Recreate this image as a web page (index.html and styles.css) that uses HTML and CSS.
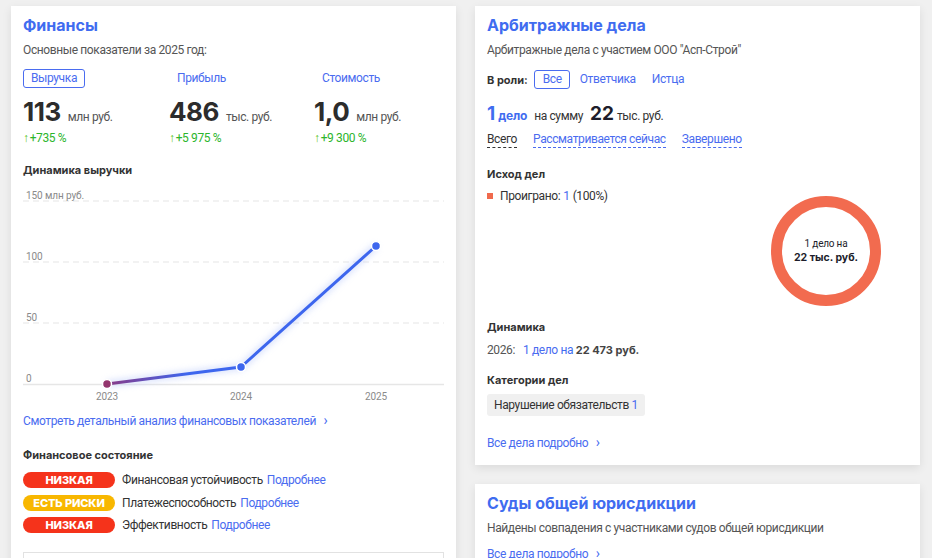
FILE: index.html
```html
<!DOCTYPE html>
<html lang="ru">
<head>
<meta charset="utf-8">
<title>Финансы и суды</title>
<link rel="stylesheet" href="styles.css">
</head>
<body>
<div class="page">
  <div class="col">
    <section class="card fin">
      <h2 class="title">Финансы</h2>
      <p class="sub">Основные показатели за 2025 год:</p>
      <div class="kpis">
        <div class="kpi">
          <span class="tab active">Выручка</span>
          <div class="val"><b>113</b><span>млн руб.</span></div>
          <div class="up"><i>↑</i>+735 %</div>
        </div>
        <div class="kpi">
          <span class="tab">Прибыль</span>
          <div class="val"><b>486</b><span>тыс. руб.</span></div>
          <div class="up"><i>↑</i>+5 975 %</div>
        </div>
        <div class="kpi">
          <span class="tab">Стоимость</span>
          <div class="val"><b>1,0</b><span>млн руб.</span></div>
          <div class="up"><i>↑</i>+9 300 %</div>
        </div>
      </div>
      <h3 class="head">Динамика выручки</h3>
      <svg class="chart" width="421" height="216" viewBox="0 0 421 216">
        <defs>
          <linearGradient id="seg" x1="84" y1="0" x2="218" y2="0" gradientUnits="userSpaceOnUse">
            <stop offset="0" stop-color="#8a3a86"/>
            <stop offset="0.6" stop-color="#3d66ee"/>
          </linearGradient>
          <filter id="glow" x="-20%" y="-20%" width="140%" height="140%">
            <feGaussianBlur stdDeviation="3"/>
          </filter>
        </defs>
        <g class="grid">
          <line x1="0" y1="13" x2="421" y2="13"/>
          <line x1="0" y1="74" x2="421" y2="74"/>
          <line x1="0" y1="135" x2="421" y2="135"/>
        </g>
        <line class="base" x1="0" y1="196.5" x2="421" y2="196.5"/>
        <g class="ylab">
          <text x="3" y="11">150 млн руб.</text>
          <text x="3" y="72">100</text>
          <text x="3" y="133">50</text>
          <text x="3" y="194">0</text>
        </g>
        <g class="xlab">
          <text x="84" y="212">2023</text>
          <text x="218" y="212">2024</text>
          <text x="353" y="212">2025</text>
        </g>
        <polyline points="84,196 218,179 353,58" class="halo" filter="url(#glow)"/>
        <line x1="84" y1="196" x2="218" y2="179" stroke="url(#seg)" stroke-width="3" stroke-linecap="round"/>
        <line x1="218" y1="179" x2="353" y2="58" stroke="#3d66ee" stroke-width="3" stroke-linecap="round"/>
        <circle cx="84" cy="196" r="4.5" fill="#93356e" stroke="#fff" stroke-width="1.5"/>
        <circle cx="218" cy="179" r="4.5" fill="#3d66ee" stroke="#fff" stroke-width="1.5"/>
        <circle cx="353" cy="58" r="4.5" fill="#3d66ee" stroke="#fff" stroke-width="1.5"/>
      </svg>
      <a class="more">Смотреть детальный анализ финансовых показателей <span class="chev">›</span></a>
      <h3 class="head state">Финансовое состояние</h3>
      <ul class="rates">
        <li><span class="badge red">НИЗКАЯ</span>Финансовая устойчивость <a>Подробнее</a></li>
        <li><span class="badge yellow">ЕСТЬ РИСКИ</span>Платежеспособность <a>Подробнее</a></li>
        <li><span class="badge red">НИЗКАЯ</span>Эффективность <a>Подробнее</a></li>
      </ul>
      <div class="box"></div>
    </section>
  </div>

  <div class="col">
    <section class="card arb">
      <h2 class="title">Арбитражные дела</h2>
      <p class="sub">Арбитражные дела с участием ООО "Асп-Строй"</p>
      <div class="roles">
        <b>В роли:</b>
        <span class="tab active">Все</span>
        <span class="tab">Ответчика</span>
        <span class="tab">Истца</span>
      </div>
      <div class="sum">
        <b class="n">1</b><b class="unit">дело</b><span class="on">на сумму</span><b class="big">22</b><span class="cur">тыс. руб.</span>
      </div>
      <div class="filters">
        <span class="dash cur-f">Всего</span>
        <span class="dash">Рассматривается сейчас</span>
        <span class="dash">Завершено</span>
      </div>
      <h3 class="head outcome">Исход дел</h3>
      <div class="result">
        <div class="legend"><i class="sq"></i>Проиграно: <a>1</a> (100%)</div>
        <div class="donut">
          <svg width="112" height="112" viewBox="0 0 112 112">
            <circle cx="56" cy="56" r="49.5" fill="none" stroke="#f26b4f" stroke-width="11"/>
          </svg>
          <div class="donut-text"><span>1 дело на</span><b>22 тыс. руб.</b></div>
        </div>
      </div>
      <h3 class="head dyn">Динамика</h3>
      <p class="year"><span class="y">2026:</span><a>1 дело</a> <span class="na">на</span> <b>22 473 руб.</b></p>
      <h3 class="head cat">Категории дел</h3>
      <span class="chip">Нарушение обязательств <a>1</a></span>
      <a class="more all">Все дела подробно <span class="chev">›</span></a>
    </section>

    <section class="card gen">
      <h2 class="title">Суды общей юрисдикции</h2>
      <p class="sub">Найдены совпадения с участниками судов общей юрисдикции</p>
      <a class="more">Все дела подробно <span class="chev">›</span></a>
    </section>
  </div>
</div>
</body>
</html>
```

FILE: styles.css
```css
* { box-sizing: border-box; }

html, body {
  margin: 0;
  padding: 0;
  background: #f0f0f0;
  height: 558px;
  overflow: hidden;
}

body {
  font-family: Roboto, "Noto Sans", sans-serif;
  font-size: 12px;
  letter-spacing: -0.38px;
  color: #333;
}

a { color: #4a6cf0; text-decoration: none; }

.page {
  display: flex;
  gap: 19px;
  padding: 6px 12px 0 11px;
  align-items: flex-start;
}

.col {
  width: 445px;
  display: flex;
  flex-direction: column;
  gap: 19px;
}

.card {
  background: #fff;
  box-shadow: 0 3px 9px rgba(0, 0, 0, 0.09);
  padding: 7px 12px 12px;
}

.title {
  margin: 0;
  font-family: Inter, Roboto, sans-serif;
  font-size: 16px;
  line-height: 24px;
  font-weight: 700;
  letter-spacing: 0;
  color: #3f6cf0;
}

.sub {
  margin: 4px 0 0;
  line-height: 18px;
  color: #555;
}

.head {
  margin: 0;
  font-family: Inter, Roboto, sans-serif;
  font-size: 11px;
  line-height: 16px;
  font-weight: 700;
  letter-spacing: 0;
  color: #333;
}

.tab {
  display: inline-block;
  height: 19px;
  line-height: 17px;
  padding: 0 7px;
  border: 1px solid transparent;
  border-radius: 3px;
  color: #4a6cf0;
}

.tab.active { border-color: #4a6cf0; }

/* KPI block */
.kpis {
  display: grid;
  grid-template-columns: 146px 145px 1fr;
  margin-top: 10px;
}

.val {
  margin-top: 9px;
  display: flex;
  align-items: baseline;
  gap: 7px;
  height: 30px;
}

.val b {
  font-family: Inter, Roboto, sans-serif;
  font-size: 26px;
  line-height: 30px;
  font-weight: 700;
  color: #2c2c2c;
  letter-spacing: -0.5px;
}

.val span { color: #555; }

.up {
  margin-top: 4px;
  color: #2cb52c;
  line-height: 14px;
}

.up i {
  font-style: normal;
  color: #58c21b;
  margin-right: 1px;
}

.fin .head { margin-top: 17px; }

.chart {
  display: block;
  margin-top: 10px;
  overflow: visible;
}

.grid line {
  stroke: #e5e5e5;
  stroke-width: 1;
  stroke-dasharray: 6 4;
}

.base { stroke: #e6e6e6; stroke-width: 1.5; }

.ylab text,
.xlab text {
  font-family: Roboto, "Noto Sans", sans-serif;
  font-size: 10px;
  letter-spacing: -0.1px;
  fill: #8a8a8a;
}

.xlab text { text-anchor: middle; }

.halo {
  fill: none;
  stroke: #c3d0fb;
  stroke-width: 7;
  opacity: 0.6;
}

.more {
  display: inline-block;
  margin-top: 9px;
  line-height: 16px;
}

.chev {
  display: inline-block;
  margin-left: 5px;
  font-size: 14px;
  line-height: 14px;
}

.fin .head.state { margin-top: 18px; }

.rates {
  list-style: none;
  margin: 9px 0 0;
  padding: 0;
}

.rates li {
  display: flex;
  align-items: center;
  height: 16px;
  margin-bottom: 6.5px;
  color: #333;
}

.rates li a { margin-left: 4px; }

.badge {
  width: 92px;
  height: 16px;
  border-radius: 8px;
  color: #fff;
  font-family: Inter, Roboto, sans-serif;
  font-weight: 800;
  font-size: 11px;
  line-height: 16px;
  text-align: center;
  margin-right: 7px;
  letter-spacing: -0.1px;
}

.badge.red { background: #f5331b; }
.badge.yellow { background: #f8b700; }

.box {
  margin-top: 19px;
  height: 40px;
  border: 1px solid #e2e2e2;
  border-bottom: 0;
}

/* Arbitration card */
.arb { padding-bottom: 14px; }

.roles {
  margin-top: 11px;
  display: flex;
  align-items: center;
}

.roles b {
  margin-right: 6px;
  color: #333;
  font-family: Inter, Roboto, sans-serif;
  font-size: 11px;
  letter-spacing: 0;
}

.roles .tab { padding: 0 7px; }
.roles .tab.active { padding: 0 7px 0 8px; margin-right: 2px; }

.sum {
  margin-top: 13px;
  display: flex;
  align-items: baseline;
  height: 24px;
}

.sum .n {
  font-family: Inter, Roboto, sans-serif;
  font-size: 19px;
  color: #3f6cf0;
  font-weight: 700;
  letter-spacing: 0;
}

.sum .unit {
  font-family: Inter, Roboto, sans-serif;
  color: #3f6cf0;
  margin-left: 3px;
  margin-right: 7px;
  letter-spacing: -0.2px;
}

.sum .on { color: #333; margin-right: 7px; }

.sum .big {
  font-family: Inter, Roboto, sans-serif;
  font-size: 19px;
  color: #1d1d2b;
  font-weight: 700;
  margin-right: 3px;
  letter-spacing: 0;
}

.sum .cur { color: #333; }

.filters {
  margin-top: 5px;
  display: flex;
  gap: 16px;
}

.dash {
  color: #4a6cf0;
  line-height: 16px;
  border-bottom: 1px dashed #4a6cf0;
}

.dash.cur-f { color: #333; border-bottom-color: #333; }

.head.outcome { margin-top: 18px; }

.result {
  position: relative;
  height: 130px;
}

.legend {
  margin-top: 7px;
  display: flex;
  align-items: center;
  color: #333;
}

.legend a { margin: 0 3px; }

.sq {
  width: 6px;
  height: 6px;
  background: #f06a4d;
  margin-right: 7px;
}

.donut {
  position: absolute;
  left: 283px;
  top: 6px;
  width: 112px;
  height: 112px;
}

.donut svg { display: block; }

.donut-text {
  position: absolute;
  inset: 0;
  display: flex;
  flex-direction: column;
  align-items: center;
  justify-content: center;
  color: #1d1d2b;
  letter-spacing: -0.2px;
}

.donut-text span { font-size: 10px; line-height: 12px; }
.donut-text b {
  font-family: Inter, Roboto, sans-serif;
  font-size: 10.5px;
  line-height: 15px;
  letter-spacing: 0;
}

.head.dyn { margin-top: 0; }

.year {
  margin: 7px 0 0;
  line-height: 16px;
  color: #555;
}

.year .y { margin-right: 8px; }
.year .na { color: #3f6cf0; }
.year b {
  color: #444;
  font-family: Inter, Roboto, sans-serif;
  font-size: 11px;
  letter-spacing: 0;
}

.head.cat { margin-top: 14px; }

.chip {
  display: inline-block;
  margin-top: 6px;
  background: #f0f0f0;
  border-radius: 3px;
  padding: 0 7px;
  height: 22px;
  line-height: 22px;
  color: #333;
}

.more.all { display: block; margin-top: 19px; }

.gen { padding-bottom: 12px; }
.sub + .more { margin-top: 9px; }
```
